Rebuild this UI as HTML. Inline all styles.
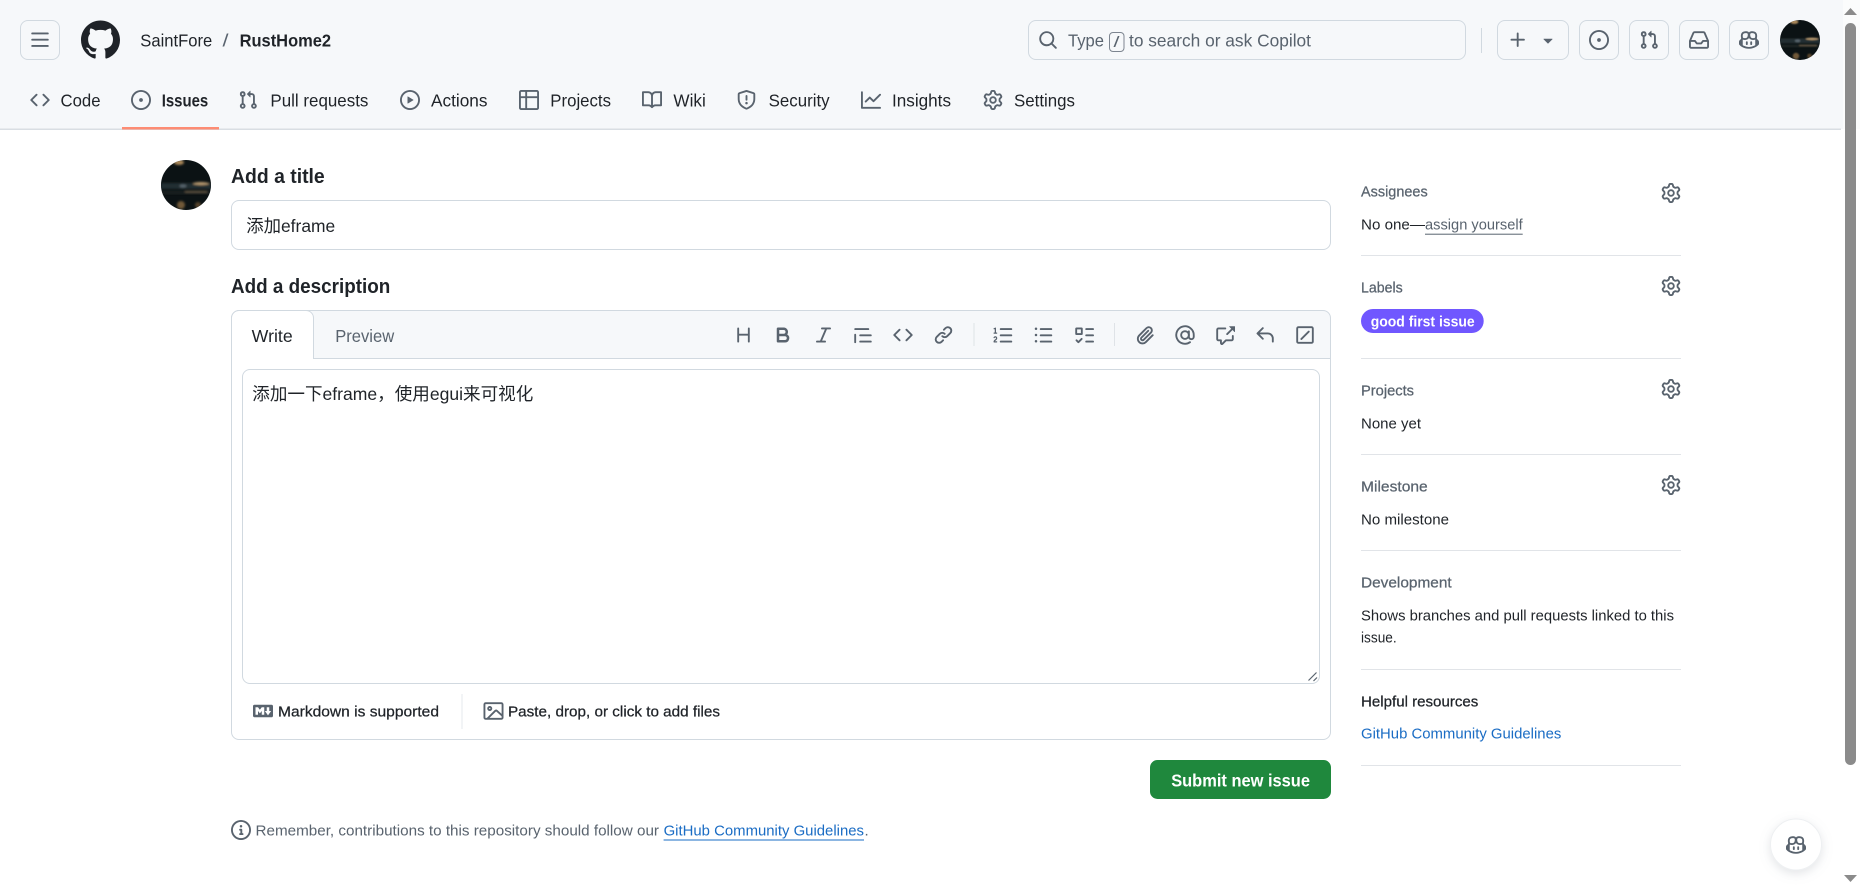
<!DOCTYPE html>
<html lang="en">
<head>
<meta charset="utf-8">
<title>New Issue · SaintFore/RustHome2</title>
<style>
html,body{margin:0;padding:0;width:1860px;height:890px;overflow:hidden;background:#fff}
svg{display:block}
text{font-family:"Liberation Sans","Noto Sans CJK SC",sans-serif;font-size:17.5px;fill:#1f2328;white-space:pre}
.s{font-size:15px}
.b{font-weight:700}
.m{stroke:currentColor;stroke-width:.25px}
.g{fill:#59636e;color:#59636e}
.d{color:#1f2328}
.l{fill:#1a6cc4}
.i{fill:#59636e}
.box{fill:none;stroke:#d1d9e0;stroke-width:1}
.hr{fill:#e1e4e8}
</style>
</head>
<body>
<svg width="1860" height="890" viewBox="0 0 1860 890" xmlns="http://www.w3.org/2000/svg">
<defs>
<filter id="bl" x="-50%" y="-50%" width="200%" height="200%"><feGaussianBlur stdDeviation="1.1"/></filter>
<filter id="fabshadow" x="-40%" y="-40%" width="180%" height="180%"><feDropShadow dx="0" dy="3" stdDeviation="5" flood-color="#8c959f" flood-opacity=".25"/></filter>
<symbol id="bars" viewBox="0 0 16 16"><path d="M1 2.75A.75.75 0 0 1 1.75 2h12.5a.75.75 0 0 1 0 1.5H1.75A.75.75 0 0 1 1 2.75Zm0 5A.75.75 0 0 1 1.75 7h12.5a.75.75 0 0 1 0 1.5H1.75A.75.75 0 0 1 1 7.75ZM1.75 12h12.5a.75.75 0 0 1 0 1.5H1.75a.75.75 0 0 1 0-1.5Z"/></symbol>
<symbol id="logo" viewBox="0 0 16 16"><path d="M8 0c4.42 0 8 3.58 8 8a8.013 8.013 0 0 1-5.45 7.59c-.4.08-.55-.17-.55-.38 0-.27.01-1.13.01-2.2 0-.75-.25-1.23-.54-1.48 1.78-.2 3.65-.88 3.65-3.95 0-.88-.31-1.59-.82-2.15.08-.2.36-1.02-.08-2.12 0 0-.67-.22-2.2.82-.64-.18-1.32-.27-2-.27-.68 0-1.36.09-2 .27-1.53-1.03-2.2-.82-2.2-.82-.44 1.1-.16 1.92-.08 2.12-.51.56-.82 1.28-.82 2.15 0 3.06 1.86 3.75 3.64 3.95-.23.2-.44.55-.51 1.07-.46.21-1.61.55-2.33-.66-.15-.24-.6-.83-1.23-.82-.67.01-.27.38.01.53.34.19.73.9.82 1.13.16.45.68 1.31 2.69.94 0 .67.01 1.3.01 1.49 0 .21-.15.45-.55.38A7.995 7.995 0 0 1 0 8c0-4.42 3.58-8 8-8Z"/></symbol>
<symbol id="code" viewBox="0 0 16 16"><path d="m11.28 3.22 4.25 4.25a.75.75 0 0 1 0 1.06l-4.25 4.25a.749.749 0 0 1-1.275-.326.749.749 0 0 1 .215-.734L13.94 8l-3.72-3.72a.749.749 0 0 1 .326-1.275.749.749 0 0 1 .734.215Zm-6.56 0a.751.751 0 0 1 1.042.018.751.751 0 0 1 .018 1.042L2.06 8l3.72 3.72a.749.749 0 0 1-.326 1.275.749.749 0 0 1-.734-.215L.47 8.53a.75.75 0 0 1 0-1.06Z"/></symbol>
<symbol id="issue" viewBox="0 0 16 16"><path d="M8 9.5a1.5 1.5 0 1 0 0-3 1.5 1.5 0 0 0 0 3Z"/><path d="M8 0a8 8 0 1 1 0 16A8 8 0 0 1 8 0ZM1.5 8a6.5 6.5 0 1 0 13 0 6.5 6.5 0 0 0-13 0Z"/></symbol>
<symbol id="pr" viewBox="0 0 16 16"><path d="M1.5 3.25a2.25 2.25 0 1 1 3 2.122v5.256a2.251 2.251 0 1 1-1.5 0V5.372A2.25 2.25 0 0 1 1.5 3.25Zm5.677-.177L9.573.677A.25.25 0 0 1 10 .854V2.5h1A2.5 2.5 0 0 1 13.5 5v5.628a2.251 2.251 0 1 1-1.5 0V5a1 1 0 0 0-1-1h-1v1.646a.25.25 0 0 1-.427.177L7.177 3.427a.25.25 0 0 1 0-.354ZM3.75 2.5a.75.75 0 1 0 0 1.5.75.75 0 0 0 0-1.5Zm0 9.5a.75.75 0 1 0 0 1.5.75.75 0 0 0 0-1.5Zm8.25.75a.75.75 0 1 0 1.5 0 .75.75 0 0 0-1.5 0Z"/></symbol>
<symbol id="play" viewBox="0 0 16 16"><path d="M8 0a8 8 0 1 1 0 16A8 8 0 0 1 8 0ZM1.5 8a6.5 6.5 0 1 0 13 0 6.5 6.5 0 0 0-13 0Zm4.879-2.773 4.264 2.559a.25.25 0 0 1 0 .428l-4.264 2.559A.25.25 0 0 1 6 10.559V5.442a.25.25 0 0 1 .379-.215Z"/></symbol>
<symbol id="table" viewBox="0 0 16 16"><path d="M0 1.75C0 .784.784 0 1.75 0h12.5C15.216 0 16 .784 16 1.75v12.5A1.75 1.75 0 0 1 14.25 16H1.75A1.75 1.75 0 0 1 0 14.25ZM6.5 6.5v8h7.75a.25.25 0 0 0 .25-.25V6.5Zm8-1.5V1.75a.25.25 0 0 0-.25-.25H6.5V5Zm-13 1.5v7.75c0 .138.112.25.25.25H5v-8ZM5 5V1.5H1.75a.25.25 0 0 0-.25.25V5Z"/></symbol>
<symbol id="book" viewBox="0 0 16 16"><path d="M0 1.75A.75.75 0 0 1 .75 1h4.253c1.227 0 2.317.59 3 1.501A3.743 3.743 0 0 1 11.006 1h4.245a.75.75 0 0 1 .75.75v10.5a.75.75 0 0 1-.75.75h-4.507a2.25 2.25 0 0 0-1.591.659l-.622.621a.75.75 0 0 1-1.06 0l-.622-.621A2.25 2.25 0 0 0 5.258 13H.75a.75.75 0 0 1-.75-.75Zm7.251 10.324.004-5.073-.002-2.253A2.25 2.25 0 0 0 5.003 2.5H1.5v9h3.757a3.75 3.75 0 0 1 1.994.574ZM8.755 4.75l-.004 7.322a3.752 3.752 0 0 1 1.992-.572H14.5v-9h-3.495a2.25 2.25 0 0 0-2.25 2.25Z"/></symbol>
<symbol id="shield" viewBox="0 0 16 16"><path d="M7.467.133a1.748 1.748 0 0 1 1.066 0l5.25 1.68A1.75 1.75 0 0 1 15 3.48V7c0 1.566-.32 3.182-1.303 4.682-.983 1.498-2.585 2.813-5.032 3.855a1.697 1.697 0 0 1-1.33 0c-2.447-1.042-4.049-2.357-5.032-3.855C1.32 10.182 1 8.566 1 7V3.48a1.75 1.75 0 0 1 1.217-1.667Zm.61 1.429a.25.25 0 0 0-.153 0l-5.25 1.68a.25.25 0 0 0-.174.238V7c0 1.358.275 2.666 1.057 3.86.784 1.194 2.121 2.34 4.366 3.297a.196.196 0 0 0 .154 0c2.245-.956 3.582-2.104 4.366-3.298C13.225 9.666 13.5 8.36 13.5 7V3.48a.251.251 0 0 0-.174-.237l-5.25-1.68ZM8.75 4.75v3a.75.75 0 0 1-1.5 0v-3a.75.75 0 0 1 1.5 0ZM9 10.5a1 1 0 1 1-2 0 1 1 0 0 1 2 0Z"/></symbol>
<symbol id="graph" viewBox="0 0 16 16"><path d="M1.5 1.75V13.5h13.75a.75.75 0 0 1 0 1.5H.75a.75.75 0 0 1-.75-.75V1.75a.75.75 0 0 1 1.5 0Zm14.28 2.53-5.25 5.25a.75.75 0 0 1-1.06 0L7 7.06 4.28 9.78a.751.751 0 0 1-1.042-.018.751.751 0 0 1-.018-1.042l3.25-3.25a.75.75 0 0 1 1.06 0L10 7.94l4.72-4.72a.751.751 0 0 1 1.042.018.751.751 0 0 1 .018 1.042Z"/></symbol>
<symbol id="gear" viewBox="0 0 16 16"><path d="M8 0a8.2 8.2 0 0 1 .701.031C9.444.095 9.99.645 10.16 1.29l.288 1.107c.018.066.079.158.212.224.231.114.454.243.668.386.123.082.233.09.299.071l1.103-.303c.644-.176 1.392.021 1.82.63.27.385.506.792.704 1.218.315.675.111 1.422-.364 1.891l-.814.806c-.049.048-.098.147-.088.294.016.257.016.515 0 .772-.01.147.038.246.088.294l.814.806c.475.469.679 1.216.364 1.891a7.977 7.977 0 0 1-.704 1.217c-.428.61-1.176.807-1.82.63l-1.102-.302c-.067-.019-.177-.011-.3.071a5.909 5.909 0 0 1-.668.386c-.133.066-.194.158-.211.224l-.29 1.106c-.168.646-.715 1.196-1.458 1.26a8.006 8.006 0 0 1-1.402 0c-.743-.064-1.289-.614-1.458-1.26l-.289-1.106c-.018-.066-.079-.158-.212-.224a5.738 5.738 0 0 1-.668-.386c-.123-.082-.233-.09-.299-.071l-1.103.303c-.644.176-1.392-.021-1.82-.63a8.12 8.12 0 0 1-.704-1.218c-.315-.675-.111-1.422.363-1.891l.815-.806c.05-.048.098-.147.088-.294a6.214 6.214 0 0 1 0-.772c.01-.147-.038-.246-.088-.294l-.815-.806C.635 6.045.431 5.298.746 4.623a7.92 7.92 0 0 1 .704-1.217c.428-.61 1.176-.807 1.82-.63l1.102.302c.067.019.177.011.3-.071.214-.143.437-.272.668-.386.133-.066.194-.158.211-.224l.29-1.106C6.009.645 6.556.095 7.299.03 7.53.01 7.764 0 8 0Zm-.571 1.525c-.036.003-.108.036-.137.146l-.289 1.105c-.147.561-.549.967-.998 1.189-.173.086-.34.183-.5.29-.417.278-.97.423-1.529.27l-1.103-.303c-.109-.03-.175.016-.195.045-.22.312-.412.644-.573.99-.014.031-.021.11.059.19l.815.806c.411.406.562.957.53 1.456a4.709 4.709 0 0 0 0 .582c.032.499-.119 1.05-.53 1.456l-.815.806c-.081.08-.073.159-.059.19.162.346.353.677.573.989.02.03.085.076.195.046l1.102-.303c.56-.153 1.113-.008 1.53.27.161.107.328.204.501.29.447.222.85.629.997 1.189l.289 1.105c.029.109.101.143.137.146a6.6 6.6 0 0 0 1.142 0c.036-.003.108-.036.137-.146l.289-1.105c.147-.561.549-.967.998-1.189.173-.086.34-.183.5-.29.417-.278.97-.423 1.529-.27l1.103.303c.109.029.175-.016.195-.045.22-.313.411-.644.573-.99.014-.031.021-.11-.059-.19l-.815-.806c-.411-.406-.562-.957-.53-1.456a4.709 4.709 0 0 0 0-.582c-.032-.499.119-1.05.53-1.456l.815-.806c.081-.08.073-.159.059-.19a6.464 6.464 0 0 0-.573-.989c-.02-.03-.085-.076-.195-.046l-1.102.303c-.56.153-1.113.008-1.53-.27a4.44 4.44 0 0 0-.501-.29c-.447-.222-.85-.629-.997-1.189l-.289-1.105c-.029-.11-.101-.143-.137-.146a6.6 6.6 0 0 0-1.142 0ZM11 8a3 3 0 1 1-6 0 3 3 0 0 1 6 0ZM9.5 8a1.5 1.5 0 1 0-3.001.001A1.5 1.5 0 0 0 9.5 8Z"/></symbol>
<symbol id="search" viewBox="0 0 16 16"><path d="M10.68 11.74a6 6 0 0 1-7.922-8.982 6 6 0 0 1 8.982 7.922l3.04 3.04a.749.749 0 0 1-.326 1.275.749.749 0 0 1-.734-.215ZM11.5 7a4.499 4.499 0 1 0-8.997 0A4.499 4.499 0 0 0 11.5 7Z"/></symbol>
<symbol id="plus" viewBox="0 0 16 16"><path d="M7.75 2a.75.75 0 0 1 .75.75V7h4.25a.75.75 0 0 1 0 1.5H8.5v4.25a.75.75 0 0 1-1.5 0V8.5H2.75a.75.75 0 0 1 0-1.5H7V2.75A.75.75 0 0 1 7.75 2Z"/></symbol>
<symbol id="tri" viewBox="0 0 16 16"><path d="m4.427 7.427 3.396 3.396a.25.25 0 0 0 .354 0l3.396-3.396A.25.25 0 0 0 11.396 7H4.604a.25.25 0 0 0-.177.427Z"/></symbol>
<symbol id="inbox" viewBox="0 0 16 16"><path d="M2.8 2.06A1.75 1.75 0 0 1 4.41 1h7.18c.7 0 1.333.417 1.61 1.06l2.74 6.395c.04.093.06.194.06.295v4.5A1.75 1.75 0 0 1 14.25 15H1.75A1.75 1.75 0 0 1 0 13.25v-4.5c0-.101.02-.202.06-.295Zm1.61.44a.25.25 0 0 0-.23.152L1.887 8H4.75a.75.75 0 0 1 .6.3L6.625 10h2.75l1.275-1.7a.75.75 0 0 1 .6-.3h2.863L11.82 2.652a.25.25 0 0 0-.23-.152Zm10.09 7h-2.875l-1.275 1.7a.75.75 0 0 1-.6.3h-3.5a.75.75 0 0 1-.6-.3L4.375 9.5H1.5v3.75c0 .138.112.25.25.25h12.5a.25.25 0 0 0 .25-.25Z"/></symbol>
<symbol id="copilot" viewBox="0 0 16 16"><path d="M7.998 15.035c-4.562 0-7.873-2.914-7.998-3.749V9.338c.085-.628.677-1.686 1.588-2.065.013-.07.024-.143.036-.218.029-.183.06-.384.126-.612-.201-.508-.254-1.084-.254-1.656 0-.87.128-1.769.693-2.484.579-.733 1.494-1.124 2.724-1.261 1.206-.134 2.262.034 2.944.765.05.053.096.108.139.165.044-.057.094-.112.143-.165.682-.731 1.738-.899 2.944-.765 1.23.137 2.145.528 2.724 1.261.566.715.693 1.614.693 2.484 0 .572-.053 1.148-.254 1.656.066.228.098.429.126.612.012.076.024.148.037.218.924.385 1.522 1.471 1.591 2.095v1.872c0 .766-3.351 3.795-8.002 3.795Zm0-1.485c2.28 0 4.584-1.11 5.002-1.433V7.862l-.023-.116c-.49.21-1.075.291-1.727.291-1.146 0-2.059-.327-2.71-.991A3.222 3.222 0 0 1 8 6.303a3.24 3.24 0 0 1-.544.743c-.65.664-1.563.991-2.71.991-.652 0-1.236-.081-1.727-.291l-.023.116v4.255c.419.323 2.722 1.433 5.002 1.433ZM6.762 2.83c-.193-.206-.637-.413-1.682-.297-1.019.113-1.479.404-1.713.7-.247.312-.369.789-.369 1.554 0 .793.129 1.171.308 1.371.162.181.519.379 1.442.379.853 0 1.339-.235 1.638-.54.315-.322.527-.827.617-1.553.117-.935-.037-1.395-.241-1.614Zm4.155-.297c-1.044-.116-1.488.091-1.681.297-.204.219-.359.679-.242 1.614.091.726.303 1.231.618 1.553.299.305.784.54 1.638.54.922 0 1.28-.198 1.442-.379.179-.2.308-.578.308-1.371 0-.765-.123-1.242-.37-1.554-.233-.296-.693-.587-1.713-.7Z"/><path d="M6.25 9.037a.75.75 0 0 1 .75.75v1.501a.75.75 0 0 1-1.5 0V9.787a.75.75 0 0 1 .75-.75Zm4.25.75v1.501a.75.75 0 0 1-1.5 0V9.787a.75.75 0 0 1 1.5 0Z"/></symbol>
<symbol id="heading" viewBox="0 0 16 16"><path d="M3.75 2a.75.75 0 0 1 .75.75V7h7V2.75a.75.75 0 0 1 1.5 0v10.5a.75.75 0 0 1-1.5 0V8.5h-7v4.75a.75.75 0 0 1-1.5 0V2.75A.75.75 0 0 1 3.75 2Z"/></symbol>
<symbol id="bold" viewBox="0 0 16 16"><path d="M4 2h4.5a3.501 3.501 0 0 1 2.852 5.53A3.499 3.499 0 0 1 9.5 14H4a1 1 0 0 1-1-1V3a1 1 0 0 1 1-1Zm1 7v3h4.5a1.5 1.5 0 0 0 0-3Zm3.5-2a1.5 1.5 0 0 0 0-3H5v3Z"/></symbol>
<symbol id="italic" viewBox="0 0 16 16"><path d="M6 2.75A.75.75 0 0 1 6.75 2h6.5a.75.75 0 0 1 0 1.5h-2.505l-3.858 9H9.25a.75.75 0 0 1 0 1.5h-6.5a.75.75 0 0 1 0-1.5h2.505l3.858-9H6.75A.75.75 0 0 1 6 2.75Z"/></symbol>
<symbol id="quote" viewBox="0 0 16 16"><path d="M1.75 2.5h10.5a.75.75 0 0 1 0 1.5H1.75a.75.75 0 0 1 0-1.5Zm4 5h8.5a.75.75 0 0 1 0 1.5h-8.5a.75.75 0 0 1 0-1.5Zm0 5h8.5a.75.75 0 0 1 0 1.5h-8.5a.75.75 0 0 1 0-1.5ZM2.5 7.75v6a.75.75 0 0 1-1.5 0v-6a.75.75 0 0 1 1.5 0Z"/></symbol>
<symbol id="link" viewBox="0 0 16 16"><path d="m7.775 3.275 1.25-1.25a3.5 3.5 0 1 1 4.95 4.95l-2.5 2.5a3.5 3.5 0 0 1-4.95 0 .751.751 0 0 1 .018-1.042.751.751 0 0 1 1.042-.018 1.998 1.998 0 0 0 2.83 0l2.5-2.5a2.002 2.002 0 0 0-2.83-2.83l-1.25 1.25a.751.751 0 0 1-1.042-.018.751.751 0 0 1-.018-1.042Zm-4.69 9.64a1.998 1.998 0 0 0 2.83 0l1.25-1.25a.751.751 0 0 1 1.042.018.751.751 0 0 1 .018 1.042l-1.25 1.25a3.5 3.5 0 1 1-4.95-4.95l2.5-2.5a3.5 3.5 0 0 1 4.95 0 .751.751 0 0 1-.018 1.042.751.751 0 0 1-1.042.018 1.998 1.998 0 0 0-2.83 0l-2.5 2.5a1.998 1.998 0 0 0 0 2.83Z"/></symbol>
<symbol id="ol" viewBox="0 0 16 16"><path d="M5 3.25a.75.75 0 0 1 .75-.75h8.5a.75.75 0 0 1 0 1.5h-8.5A.75.75 0 0 1 5 3.25Zm0 5a.75.75 0 0 1 .75-.75h8.5a.75.75 0 0 1 0 1.5h-8.5A.75.75 0 0 1 5 8.25Zm0 5a.75.75 0 0 1 .75-.75h8.5a.75.75 0 0 1 0 1.5h-8.5a.75.75 0 0 1-.75-.75ZM.924 10.32a.5.5 0 0 1-.851-.525l.001-.001.001-.002.002-.004.007-.011c.097-.144.215-.273.348-.384.228-.19.588-.392 1.068-.392.468 0 .858.181 1.126.484.259.294.377.673.377 1.038 0 .987-.686 1.495-1.156 1.845l-.047.035c-.303.225-.522.4-.654.597h1.357a.5.5 0 0 1 0 1H.5a.5.5 0 0 1-.5-.5c0-1.005.692-1.52 1.167-1.875l.035-.025c.531-.396.8-.625.8-1.078a.57.57 0 0 0-.128-.376C1.806 10.068 1.695 10 1.5 10a.658.658 0 0 0-.429.163.835.835 0 0 0-.144.153ZM2.003 2.5V6h.503a.5.5 0 0 1 0 1H.5a.5.5 0 0 1 0-1h.503V3.308l-.28.14a.5.5 0 0 1-.446-.895l1.003-.5a.5.5 0 0 1 .723.447Z"/></symbol>
<symbol id="ul" viewBox="0 0 16 16"><path d="M5.75 2.5h8.5a.75.75 0 0 1 0 1.5h-8.5a.75.75 0 0 1 0-1.5Zm0 5h8.5a.75.75 0 0 1 0 1.5h-8.5a.75.75 0 0 1 0-1.5Zm0 5h8.5a.75.75 0 0 1 0 1.5h-8.5a.75.75 0 0 1 0-1.5ZM2 14a1 1 0 1 1 0-2 1 1 0 0 1 0 2Zm1-6a1 1 0 1 1-2 0 1 1 0 0 1 2 0ZM2 4a1 1 0 1 1 0-2 1 1 0 0 1 0 2Z"/></symbol>
<symbol id="task" viewBox="0 0 16 16"><path d="M2 2h4a1 1 0 0 1 1 1v4a1 1 0 0 1-1 1H2a1 1 0 0 1-1-1V3a1 1 0 0 1 1-1Zm4.655 8.595a.75.75 0 0 1 0 1.06L4.03 14.28a.75.75 0 0 1-1.06 0l-1.5-1.5a.749.749 0 0 1 .326-1.275.749.749 0 0 1 .734.215l.97.97 2.095-2.095a.75.75 0 0 1 1.06 0ZM9.75 2.5h5.5a.75.75 0 0 1 0 1.5h-5.5a.75.75 0 0 1 0-1.5Zm0 5h5.5a.75.75 0 0 1 0 1.5h-5.5a.75.75 0 0 1 0-1.5Zm0 5h5.5a.75.75 0 0 1 0 1.5h-5.5a.75.75 0 0 1 0-1.5Zm-7.25-9v3h3v-3Z"/></symbol>
<symbol id="clip" viewBox="0 0 16 16"><path d="M12.212 3.02a1.753 1.753 0 0 0-2.478.003l-5.83 5.83a3.007 3.007 0 0 0-.88 2.127c0 .795.315 1.551.88 2.116.567.567 1.333.89 2.126.89.79 0 1.548-.321 2.116-.89l5.48-5.48a.75.75 0 0 1 1.061 1.06l-5.48 5.48a4.492 4.492 0 0 1-3.177 1.33c-1.2 0-2.345-.487-3.187-1.33a4.483 4.483 0 0 1-1.32-3.176c0-1.195.475-2.341 1.32-3.186l5.83-5.83a3.25 3.25 0 0 1 5.553 2.297c0 .863-.343 1.691-.953 2.301L7.439 12.39c-.375.377-.884.59-1.416.593a1.998 1.998 0 0 1-1.412-.593 1.992 1.992 0 0 1 0-2.828l5.48-5.48a.751.751 0 0 1 1.042.018.751.751 0 0 1 .018 1.042l-5.48 5.48a.492.492 0 0 0 0 .707.499.499 0 0 0 .707 0l5.833-5.827a1.75 1.75 0 0 0 .001-2.481Z"/></symbol>
<symbol id="at" viewBox="0 0 16 16"><circle cx="8" cy="8" r="3.1" fill="none" stroke="#59636e" stroke-width="1.5"/><path d="M11.1 5v4.4a1.95 1.95 0 0 0 3.9 0V8a7 7 0 1 0-3 5.75" fill="none" stroke="#59636e" stroke-width="1.5" stroke-linecap="round"/></symbol>
<symbol id="xref" viewBox="0 0 16 16"><path d="M2.75 3.5a.25.25 0 0 0-.25.25v7.5c0 .138.112.25.25.25h2a.75.75 0 0 1 .75.75v2.19l2.72-2.72a.747.747 0 0 1 .53-.22h4.5a.25.25 0 0 0 .25-.25v-2.5a.75.75 0 0 1 1.5 0v2.5A1.75 1.75 0 0 1 13.25 13H9.06l-2.573 2.573A1.458 1.458 0 0 1 4 14.543V13H2.75A1.75 1.75 0 0 1 1 11.25v-7.5C1 2.784 1.784 2 2.75 2h5.5a.75.75 0 0 1 0 1.5ZM16 1.25v4.146a.25.25 0 0 1-.427.177L14.03 4.03l-3.75 3.75a.749.749 0 0 1-1.275-.326.749.749 0 0 1 .215-.734l3.75-3.75-1.543-1.543A.25.25 0 0 1 11.604 1h4.146a.25.25 0 0 1 .25.25Z"/></symbol>
<symbol id="reply" viewBox="0 0 16 16"><path d="M6.78 1.97a.75.75 0 0 1 0 1.06L3.81 6h6.44A4.75 4.75 0 0 1 15 10.75v2.5a.75.75 0 0 1-1.5 0v-2.5a3.25 3.25 0 0 0-3.25-3.25H3.81l2.97 2.97a.749.749 0 0 1-.326 1.275.749.749 0 0 1-.734-.215L1.47 7.28a.75.75 0 0 1 0-1.06l4.25-4.25a.75.75 0 0 1 1.06 0Z"/></symbol>
<symbol id="slash" viewBox="0 0 16 16"><path d="M1 2.75C1 1.784 1.784 1 2.75 1h10.5c.966 0 1.75.784 1.75 1.75v10.5A1.75 1.75 0 0 1 13.25 15H2.75A1.75 1.75 0 0 1 1 13.25Zm1.75-.25a.25.25 0 0 0-.25.25v10.5c0 .138.112.25.25.25h10.5a.25.25 0 0 0 .25-.25V2.75a.25.25 0 0 0-.25-.25Z"/><path d="M10.5 4.7a.75.75 0 0 1 1.06 1.06l-6 6a.75.75 0 0 1-1.06-1.06Z"/></symbol>
<symbol id="md" viewBox="0 0 16 16"><path d="M14.85 3c.63 0 1.15.52 1.14 1.15v7.7c0 .63-.51 1.15-1.15 1.15H1.15C.52 13 0 12.48 0 11.84V4.15C0 3.52.52 3 1.15 3ZM9 11V5H7L5.5 7 4 5H2v6h2V8l1.5 1.92L7 8v3Zm2.99.5L14.5 8H13V5h-2v3H9.5Z"/></symbol>
<symbol id="image" viewBox="0 0 16 16"><path d="M16 13.25A1.75 1.75 0 0 1 14.25 15H1.75A1.75 1.75 0 0 1 0 13.25V2.75C0 1.784.784 1 1.75 1h12.5c.966 0 1.75.784 1.75 1.75ZM1.75 2.5a.25.25 0 0 0-.25.25v10.5c0 .138.112.25.25.25h.94l.03-.03 6.077-6.078a1.75 1.75 0 0 1 2.412-.06L14.5 10.31V2.75a.25.25 0 0 0-.25-.25Zm12.5 11a.25.25 0 0 0 .25-.25v-.917l-4.298-3.889a.25.25 0 0 0-.344.009L4.81 13.5ZM7 6a2 2 0 1 1-3.999.001A2 2 0 0 1 7 6ZM5.5 6a.5.5 0 1 0-1 0 .5.5 0 0 0 1 0Z"/></symbol>
<symbol id="info" viewBox="0 0 16 16"><path d="M0 8a8 8 0 1 1 16 0A8 8 0 0 1 0 8Zm8-6.5a6.5 6.5 0 1 0 0 13 6.5 6.5 0 0 0 0-13ZM6.5 7.75A.75.75 0 0 1 7.25 7h1a.75.75 0 0 1 .75.75v2.75h.25a.75.75 0 0 1 0 1.5h-2a.75.75 0 0 1 0-1.5h.25v-2h-.25a.75.75 0 0 1-.75-.75ZM8 6a1 1 0 1 1 0-2 1 1 0 0 1 0 2Z"/></symbol>
<symbol id="avatar" viewBox="0 0 50 50">
  <clipPath id="ac"><circle cx="25" cy="25" r="25"/></clipPath>
  <g clip-path="url(#ac)">
    <rect width="50" height="50" fill="#0b1214"/>
    <g filter="url(#bl)">
      <rect x="0" y="23" width="50" height="6" fill="#222d31"/>
      <rect x="0" y="31" width="50" height="3" fill="#1c2224"/>
      <ellipse cx="18" cy="2.500" rx="5" ry="2.500" fill="#a98658"/>
      <ellipse cx="40" cy="23.500" rx="8" ry="1.500" fill="#b89a70"/>
      <ellipse cx="22" cy="26" rx="3.500" ry="1.800" fill="#55626a"/>
      <rect x="24" y="31" width="22" height="1.400" fill="#6f6049"/>
      <ellipse cx="20" cy="45" rx="4" ry="4" fill="#705838"/>
      <ellipse cx="37" cy="45" rx="3" ry="3" fill="#554329"/>
    </g>
  </g>
</symbol>
</defs>

<!-- page background -->
<rect width="1860" height="890" fill="#fff"/>

<!-- header -->
<rect width="1843" height="129" fill="#f6f8fa"/>
<rect x="1843" width="17" height="129" fill="#fbfcfc"/>
<rect x="0" y="128.500" width="1841" height="1.500" fill="#d9dee3"/>
<rect x="122" y="127" width="97" height="2.500" fill="#fd8c73"/>

<rect class="box" x="20.500" y="20.500" width="39" height="39" rx="7.500"/>
<use href="#bars" class="i" x="30" y="30" width="20" height="20"/>
<use href="#logo" fill="#1f2328" x="81" y="20.500" width="39" height="39"/>
<text x="140.300" y="46.500" textLength="72" lengthAdjust="spacingAndGlyphs">SaintFore</text>
<text x="222.500" y="46.500" class="g" textLength="6" lengthAdjust="spacingAndGlyphs">/</text>
<text x="239.600" y="46.500" class="b" textLength="91.500" lengthAdjust="spacingAndGlyphs">RustHome2</text>

<!-- nav -->
<use href="#code" class="i" x="30" y="90" width="20" height="20"/>
<text x="60.500" y="106.500" textLength="40" lengthAdjust="spacingAndGlyphs">Code</text>
<use href="#issue" class="i" x="131" y="90" width="20" height="20"/>
<text x="161.700" y="106.500" class="b" textLength="46.500" lengthAdjust="spacingAndGlyphs">Issues</text>
<use href="#pr" class="i" x="238" y="90" width="20" height="20"/>
<text x="270.400" y="106.500" textLength="98" lengthAdjust="spacingAndGlyphs">Pull requests</text>
<use href="#play" class="i" x="400" y="90" width="20" height="20"/>
<text x="431" y="106.500" textLength="56.500" lengthAdjust="spacingAndGlyphs">Actions</text>
<use href="#table" class="i" x="519" y="90" width="20" height="20"/>
<text x="550.300" y="106.500" textLength="60.700" lengthAdjust="spacingAndGlyphs">Projects</text>
<use href="#book" class="i" x="642" y="90" width="20" height="20"/>
<text x="673.400" y="106.500" textLength="32.400" lengthAdjust="spacingAndGlyphs">Wiki</text>
<use href="#shield" class="i" x="736.500" y="90" width="20" height="20"/>
<text x="768.600" y="106.500" textLength="61" lengthAdjust="spacingAndGlyphs">Security</text>
<use href="#graph" class="i" x="861" y="90" width="20" height="20"/>
<text x="892" y="106.500" textLength="59" lengthAdjust="spacingAndGlyphs">Insights</text>
<use href="#gear" class="i" x="983" y="90" width="20" height="20"/>
<text x="1014" y="106.500" textLength="61" lengthAdjust="spacingAndGlyphs">Settings</text>

<!-- search -->
<rect class="box" x="1028.500" y="20.500" width="437" height="39" rx="7.500"/>
<use href="#search" class="i" x="1038" y="30" width="20" height="20"/>
<text x="1068" y="46.500" class="g" textLength="36" lengthAdjust="spacingAndGlyphs">Type</text>
<rect x="1109.500" y="32.500" width="14.500" height="19" rx="3.500" fill="none" stroke="#7d8590" stroke-width="1"/>
<text x="1113.500" y="47" class="s g" textLength="6" lengthAdjust="spacingAndGlyphs">/</text>
<text x="1129" y="46.500" class="g" textLength="182" lengthAdjust="spacingAndGlyphs">to search or ask Copilot</text>

<rect x="1481" y="28" width="1" height="25" fill="#d1d9e0"/>
<rect class="box" x="1497.500" y="20.500" width="71" height="39" rx="7.500"/>
<use href="#plus" class="i" x="1508" y="30" width="20" height="20"/>
<use href="#tri" class="i" x="1538" y="30" width="20" height="20"/>
<rect class="box" x="1579.500" y="20.500" width="39" height="39" rx="7.500"/>
<use href="#issue" class="i" x="1589" y="30" width="20" height="20"/>
<rect class="box" x="1629.500" y="20.500" width="39" height="39" rx="7.500"/>
<use href="#pr" class="i" x="1639" y="30" width="20" height="20"/>
<rect class="box" x="1679.500" y="20.500" width="39" height="39" rx="7.500"/>
<use href="#inbox" class="i" x="1689" y="30" width="20" height="20"/>
<rect class="box" x="1729.500" y="20.500" width="39" height="39" rx="7.500"/>
<use href="#copilot" class="i" x="1739" y="30" width="20" height="20"/>
<use href="#avatar" x="1780" y="20" width="40" height="40"/>

<!-- main avatar -->
<use href="#avatar" x="161" y="160" width="50" height="50"/>

<!-- title -->
<text x="231" y="183" class="b" style="font-size:20px" textLength="93.700" lengthAdjust="spacingAndGlyphs">Add a title</text>
<rect class="box" x="231.500" y="200.500" width="1099" height="49" rx="7.500" fill="#fff"/>
<text x="246.200" y="232" textLength="89" lengthAdjust="spacingAndGlyphs">添加eframe</text>

<!-- description -->
<text x="231" y="293" class="b" style="font-size:20px" textLength="159.300" lengthAdjust="spacingAndGlyphs">Add a description</text>
<path d="M231.500 358.500V318a7.500 7.500 0 0 1 7.500-7.500h1084a7.500 7.500 0 0 1 7.500 7.500v40.500Z" fill="#f6f8fa"/>
<rect class="box" x="231.500" y="310.500" width="1099" height="429" rx="7.500"/>
<rect x="231" y="358" width="1100" height="1" fill="#d1d9e0"/>
<path d="M232 359.500V318a7 7 0 0 1 7-7h67a7 7 0 0 1 7 7v41.500Z" fill="#fff"/>
<path d="M231.500 359V318a7.500 7.500 0 0 1 7.500-7.500h67a7.500 7.500 0 0 1 7.500 7.500v41" fill="none" stroke="#d1d9e0"/>
<text x="251.700" y="342" textLength="41" lengthAdjust="spacingAndGlyphs">Write</text>
<text x="335.200" y="342" class="g" textLength="59" lengthAdjust="spacingAndGlyphs">Preview</text>

<!-- toolbar -->
<use href="#heading" class="i" x="733.500" y="325" width="20" height="20"/>
<use href="#bold" class="i" x="773" y="325" width="20" height="20"/>
<use href="#italic" class="i" x="813.500" y="325" width="20" height="20"/>
<use href="#quote" class="i" x="853" y="325" width="20" height="20"/>
<use href="#code" class="i" x="893" y="325" width="20" height="20"/>
<use href="#link" class="i" x="933.500" y="325" width="20" height="20"/>
<rect x="973.500" y="323" width="1" height="23" fill="#dfe3e7"/>
<use href="#ol" class="i" x="993.500" y="325" width="20" height="20"/>
<use href="#ul" class="i" x="1033.500" y="325" width="20" height="20"/>
<use href="#task" class="i" x="1074" y="325" width="20" height="20"/>
<rect x="1114" y="323" width="1" height="23" fill="#dfe3e7"/>
<use href="#clip" class="i" x="1135" y="325" width="20" height="20"/>
<use href="#at" class="i" x="1175" y="325" width="20" height="20"/>
<use href="#xref" class="i" x="1215" y="325" width="20" height="20"/>
<use href="#reply" class="i" x="1255" y="325" width="20" height="20"/>
<use href="#slash" class="i" x="1295" y="325" width="20" height="20"/>

<!-- textarea -->
<rect class="box" x="242.500" y="369.500" width="1077" height="314" rx="7.500" fill="#fff"/>
<text x="252.300" y="400" textLength="281" lengthAdjust="spacingAndGlyphs">添加一下eframe，使用egui来可视化</text>
<path d="M1308.500 680.500l8-8M1313.500 681l3.500-3.500" stroke="#59636e" stroke-width="1.200" fill="none"/>

<!-- editor footer -->
<use href="#md" class="i" x="253" y="701" width="20" height="20"/>
<text x="278" y="716.500" class="s m d" textLength="161" lengthAdjust="spacingAndGlyphs">Markdown is supported</text>
<rect x="461.500" y="694" width="1" height="35" fill="#e6e9ec"/>
<use href="#image" class="i" x="483.500" y="701" width="20" height="20"/>
<text x="508" y="716.500" class="s m d" textLength="212" lengthAdjust="spacingAndGlyphs">Paste, drop, or click to add files</text>

<!-- submit -->
<rect x="1150" y="760" width="181" height="39" rx="7.500" fill="#1f883d"/>
<text x="1171.200" y="786.500" class="b" style="fill:#fff" textLength="138.800" lengthAdjust="spacingAndGlyphs">Submit new issue</text>

<!-- remember -->
<use href="#info" class="i" x="231" y="820" width="20" height="20"/>
<text x="255.500" y="835.500" class="s g" textLength="403.500" lengthAdjust="spacingAndGlyphs">Remember, contributions to this repository should follow our</text>
<text x="663.600" y="835.500" class="s l" textLength="200.400" lengthAdjust="spacingAndGlyphs">GitHub Community Guidelines</text>
<rect x="663.600" y="839.500" width="200.400" height="1" fill="#1a6cc4"/>
<text x="864.500" y="835.500" class="s g">.</text>

<!-- sidebar -->
<text x="1361" y="196.700" class="s m g" textLength="66.700" lengthAdjust="spacingAndGlyphs">Assignees</text>
<use href="#gear" class="i" x="1661" y="183" width="20" height="20"/>
<text x="1361" y="229.700" class="s" textLength="64" lengthAdjust="spacingAndGlyphs">No one—</text>
<text x="1425" y="229.700" class="s g" textLength="97.700" lengthAdjust="spacingAndGlyphs">assign yourself</text>
<rect x="1425" y="233.700" width="97.700" height="1" fill="#59636e"/>
<rect class="hr" x="1361" y="255" width="320" height="1"/>

<text x="1361" y="292.700" class="s m g" textLength="41.700" lengthAdjust="spacingAndGlyphs">Labels</text>
<use href="#gear" class="i" x="1661" y="276" width="20" height="20"/>
<rect x="1361" y="309" width="122.700" height="24" rx="12" fill="#7057ff"/>
<text x="1370.700" y="326.500" class="s b" style="fill:#fff" textLength="104" lengthAdjust="spacingAndGlyphs">good first issue</text>
<rect class="hr" x="1361" y="358" width="320" height="1"/>

<text x="1361" y="395.300" class="s m g" textLength="53" lengthAdjust="spacingAndGlyphs">Projects</text>
<use href="#gear" class="i" x="1661" y="379" width="20" height="20"/>
<text x="1361" y="428.700" class="s" textLength="60" lengthAdjust="spacingAndGlyphs">None yet</text>
<rect class="hr" x="1361" y="454" width="320" height="1"/>

<text x="1361" y="491.700" class="s m g" textLength="66.700" lengthAdjust="spacingAndGlyphs">Milestone</text>
<use href="#gear" class="i" x="1661" y="475" width="20" height="20"/>
<text x="1361" y="524.700" class="s" textLength="88" lengthAdjust="spacingAndGlyphs">No milestone</text>
<rect class="hr" x="1361" y="550" width="320" height="1"/>

<text x="1361" y="587.700" class="s m g" textLength="90.700" lengthAdjust="spacingAndGlyphs">Development</text>
<text x="1361" y="620.700" class="s" textLength="313" lengthAdjust="spacingAndGlyphs">Shows branches and pull requests linked to this</text>
<text x="1361" y="642.700" class="s" textLength="35.700" lengthAdjust="spacingAndGlyphs">issue.</text>
<rect class="hr" x="1361" y="669" width="320" height="1"/>

<text x="1361" y="706.700" class="s m d" textLength="117.300" lengthAdjust="spacingAndGlyphs">Helpful resources</text>
<text x="1361" y="738.700" class="s l" textLength="200.300" lengthAdjust="spacingAndGlyphs">GitHub Community Guidelines</text>
<rect class="hr" x="1361" y="765" width="320" height="1"/>

<!-- copilot fab -->
<circle cx="1796" cy="844.500" r="25.500" fill="#fff" stroke="#eef0f2" filter="url(#fabshadow)"/>
<use href="#copilot" class="i" x="1786" y="835" width="20" height="20"/>

<!-- scrollbar -->
<path d="M1850.500 8l6.500 7h-13Z" fill="#8b8b8b"/>
<rect x="1845" y="23" width="11" height="742" rx="5.500" fill="#8b8b8b"/>
<path d="M1850.500 882l6.500-7h-13Z" fill="#8b8b8b"/>
</svg>
</body>
</html>
